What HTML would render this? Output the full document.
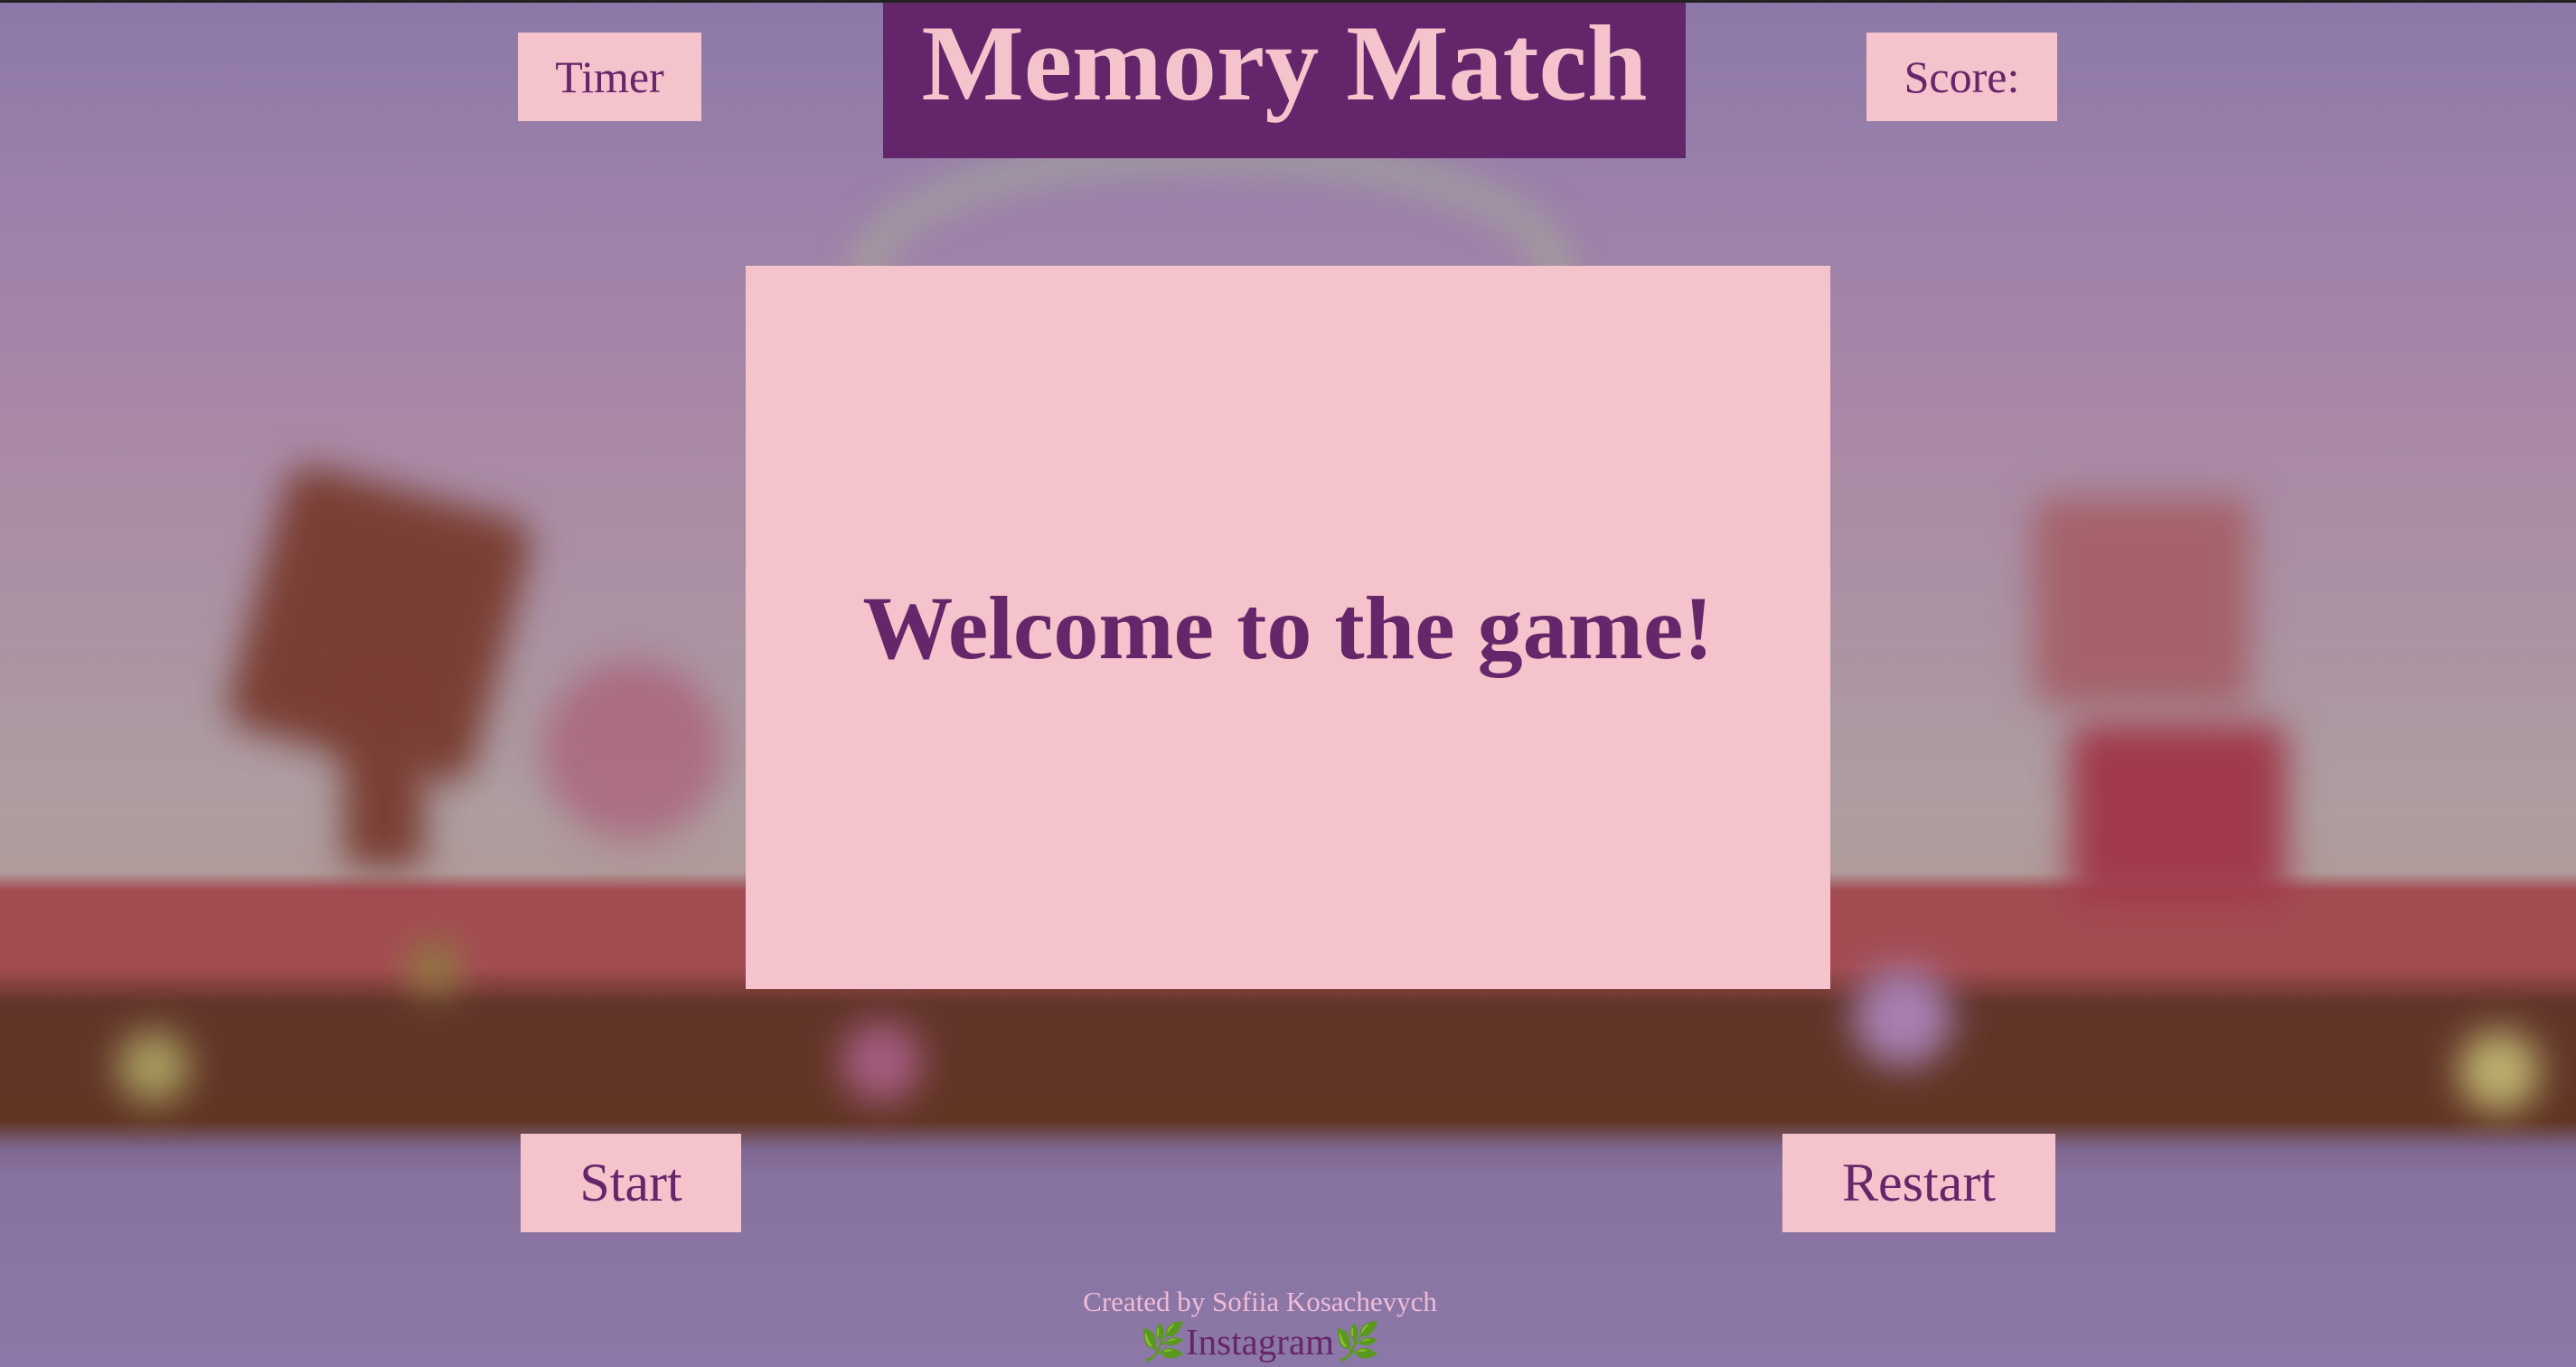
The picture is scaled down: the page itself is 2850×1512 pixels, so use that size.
<!DOCTYPE html>
<html><head><meta charset="utf-8"><style>
html,body{margin:0;padding:0}
body{width:2850px;height:1512px;overflow:hidden;position:relative;font-family:"Liberation Serif",serif;
background:linear-gradient(180deg,#8c78a8 0px,#9a80aa 200px,#a987a6 450px,#ab93a3 700px,#ae9ea0 900px,#b09a9a 965px,#a34c52 985px,#a34c52 1070px,#62352a 1110px,#623524 1240px,#7e6690 1270px,#88729f 1300px,#8c78a8 1512px);}
.b{position:absolute;border-radius:50%;filter:blur(20px)}
.box{position:absolute;background:#f5c3cb;color:#65266a;display:flex;align-items:center;justify-content:center}
</style></head><body>
<div class="b" style="left:940px;top:150px;width:720px;height:260px;border-radius:50% 50% 0 0;border:40px solid rgba(170,180,150,.5);border-bottom:none;filter:blur(18px)"></div>
<div class="b" style="left:280px;top:540px;width:280px;height:300px;background:#7a3f34;border-radius:30px;transform:rotate(15deg)"></div>
<div class="b" style="left:380px;top:760px;width:90px;height:200px;background:#7a3f34;border-radius:20px"></div>
<div class="b" style="left:600px;top:730px;width:200px;height:200px;background:rgba(170,80,110,.6)"></div>
<div class="b" style="left:2250px;top:550px;width:240px;height:230px;background:#a5626a;border-radius:20px"></div>
<div class="b" style="left:2290px;top:800px;width:240px;height:200px;background:#a03a4a;border-radius:20px"></div>
<div class="b" style="left:130px;top:1140px;width:80px;height:80px;background:#a79d60"></div>
<div class="b" style="left:930px;top:1130px;width:90px;height:90px;background:#a45c80"></div>
<div class="b" style="left:2050px;top:1070px;width:110px;height:110px;background:#a67fb0"></div>
<div class="b" style="left:2720px;top:1140px;width:90px;height:90px;background:#bcb070"></div>
<div class="b" style="left:450px;top:1040px;width:60px;height:60px;background:#8e7a40"></div>
<div style="position:absolute;left:0;top:0;width:2850px;height:3px;background:#222"></div>
<div class="box" style="left:977px;top:3px;width:888px;height:172px;background:#63266a;color:#f5c3cb;font-weight:bold;font-size:120px;align-items:flex-start;line-height:134px">Memory Match</div>
<div class="box" style="left:573px;top:36px;width:203px;height:98px;font-size:50px">Timer</div>
<div class="box" style="left:2065px;top:36px;width:211px;height:98px;font-size:50px">Score:</div>
<div class="box" style="left:825px;top:294px;width:1200px;height:800px;font-size:100px;font-weight:bold">Welcome to the game!</div>
<div class="box" style="left:576px;top:1254px;width:244px;height:109px;font-size:60px">Start</div>
<div class="box" style="left:1972px;top:1254px;width:302px;height:109px;font-size:60px">Restart</div>
<div style="position:absolute;left:0;width:2788px;top:1422px;text-align:center;font-size:31px;color:#efbcd8">Created by Sofiia Kosachevych</div>
<div style="position:absolute;left:0;width:2788px;top:1460px;text-align:center;font-size:41px;color:#65266a">🌿Instagram🌿</div>
</body></html>
